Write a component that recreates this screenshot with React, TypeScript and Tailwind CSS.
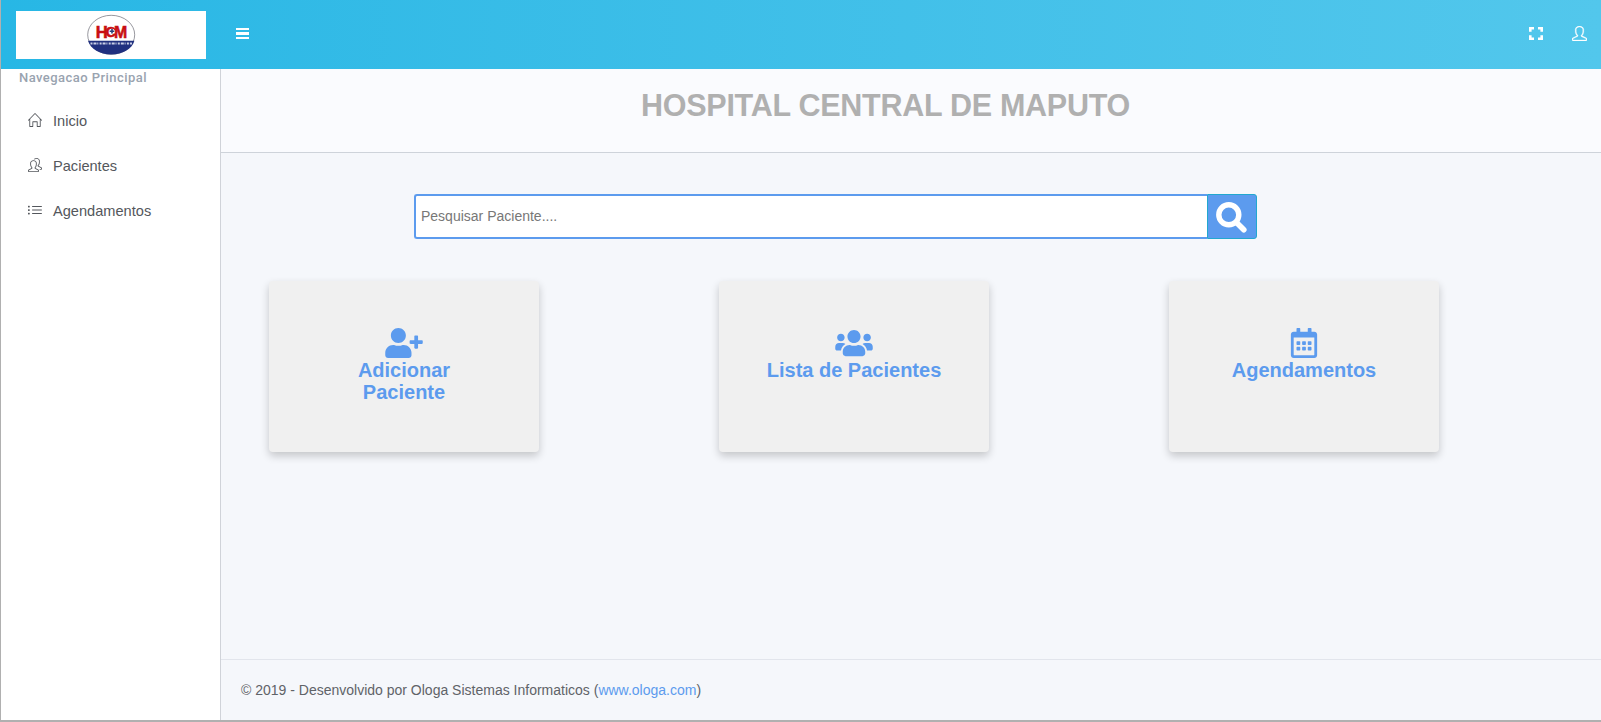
import React from "react";
import { FaRegCalendarAlt, FaUserPlus, FaUsers } from "react-icons/fa";
import { SlHome, SlList, SlPeople, SlUser } from "react-icons/sl";

function Logo() {
  return (
    <svg width="50" height="42" viewBox="0 0 50 42" aria-label="HCM">
      <ellipse cx="25.200" cy="20.800" rx="23.500" ry="19.500" fill="#fff" stroke="#6b6b75" strokeWidth="0.7" />
      <path d="M2 26.700H48.400C46 35 36.500 40.500 25.200 40.500S4.500 35 2 26.700Z" fill="#20307f" />
      <g fill="#c80f12" stroke="#c80f12" strokeWidth="0.6" fontFamily="Liberation Sans, sans-serif" fontWeight="700">
        <text x="9.800" y="24" textLength="12" lengthAdjust="spacingAndGlyphs" fontSize="17">H</text>
        <text x="19.800" y="23.200" textLength="10" lengthAdjust="spacingAndGlyphs" fontSize="14.500">C</text>
        <text x="28" y="24" textLength="13.200" lengthAdjust="spacingAndGlyphs" fontSize="17">M</text>
      </g>
      <circle cx="26" cy="17.300" r="2.600" fill="#fff" />
      <path d="M23.700 17.300h4.600M26 15v4.600" stroke="#27407a" strokeWidth="1.600" />
      <path d="M4.500 29.400H46" stroke="#c9cee6" strokeWidth="2" strokeDasharray="2 1 3 .8 1 1.300" />
    </svg>
  );
}

function Fullscreen() {
  return (
    <svg width="14" height="13" viewBox="0 0 14 13" fill="none" stroke="#fff" strokeWidth="2.600">
      <path d="M1.300 4.800V1.300H5M9 1.300H12.700V4.800M12.700 8.200V11.700H9M5 11.700H1.300V8.200" />
    </svg>
  );
}

function SearchGlyph() {
  return (
    <svg width="31" height="31" viewBox="0 0 31 31" fill="none" stroke="#fff">
      <circle cx="12.800" cy="12.800" r="10" strokeWidth="5.400" />
      <path d="M20.500 20.500L27.800 27.800" strokeWidth="5.600" strokeLinecap="round" />
    </svg>
  );
}

const nav = [
  { label: "Inicio", Icon: SlHome },
  { label: "Pacientes", Icon: SlPeople },
  { label: "Agendamentos", Icon: SlList },
];

const cards = [
  { label: "Adicionar Paciente", Icon: FaUserPlus },
  { label: "Lista de Pacientes", Icon: FaUsers },
  { label: "Agendamentos", Icon: FaRegCalendarAlt },
];

export default function App() {
  return (
    <div className="flex h-[722px] w-[1601px] flex-col overflow-hidden border-b-2 border-l border-[#b0b0b0] bg-[#f5f7fb] font-['Liberation_Sans',Arial,sans-serif]">
      <header className="flex h-[69px] shrink-0 items-center bg-linear-to-r from-[#27b7e5] to-[#52c7ec] pr-[14px] pl-[15px] text-white">
        <div className="flex h-12 w-[190px] items-center justify-center bg-white">
          <Logo />
        </div>
        <button className="mb-[2px] ml-[30px] flex w-[13px] flex-col gap-[2px]" aria-label="Menu">
          <span className="h-[2.500px] w-full bg-white" />
          <span className="h-[2.500px] w-full bg-white" />
          <span className="h-[2.500px] w-full bg-white" />
        </button>
        <div className="mb-[2px] ml-auto flex items-center gap-[29px]">
          <Fullscreen />
          <SlUser size={15} className="stroke-white stroke-[25]" />
        </div>
      </header>

      <div className="flex min-h-0 flex-1">
        <aside className="w-[220px] shrink-0 border-r border-[#d0d3d9] bg-white">
          <h2 className="pl-[18px] font-[Roboto,sans-serif] text-[13px] leading-[17px] font-medium tracking-[0.45px] text-[#99a3b0]">Navegacao Principal</h2>
          <nav className="mt-[12px]">
            {nav.map(({ label, Icon }) => (
              <a key={label} className="flex h-[45px] items-center gap-[11px] pl-[27px] text-[14.600px] text-[#54575c]">
                <Icon size={14} className="mb-px" />
                <span className="pt-[3px]">{label}</span>
              </a>
            ))}
          </nav>
        </aside>

        <main className="flex min-w-0 flex-1 flex-col">
          <section className="h-[84px] shrink-0 border-b border-[#ced3da] bg-[#fafbfe] pt-[18px] pr-[51px] text-center">
            <h1 className="text-[30.500px] leading-9 font-bold tracking-[-0.27px] whitespace-nowrap text-[#b0b0b0]">HOSPITAL CENTRAL DE MAPUTO</h1>
          </section>

          <div className="mt-[41px] ml-[193px] flex h-[45px] w-[843px]">
            <input
              className="w-[793px] rounded-l-[3px] border-2 border-r-0 border-[#5c9bee] bg-white px-[5px] pb-px text-[14px] text-[#444] placeholder:text-[#777] placeholder:opacity-100 focus:outline-none"
              placeholder="Pesquisar Paciente...."
            />
            <button className="flex w-[50px] items-center justify-center rounded-r-[3px] border border-[#22a8cf] bg-[#5c9bee] pt-[2px] pr-px" aria-label="Pesquisar">
              <SearchGlyph />
            </button>
          </div>

          <div className="mt-[42px] ml-[48px] flex gap-[180px]">
            {cards.map(({ label, Icon }) => (
              <a key={label} className="flex h-[171px] w-[270px] flex-col items-center rounded-[4px] bg-[#f0f0f0] pt-[47px] text-center text-[#5c9bee] shadow-[0_4px_8px_0_rgba(0,0,0,0.2)]">
                <Icon className="h-[30px] w-[38px]" />
                <span className="mt-px w-[180px] px-px text-[20px] leading-[22px] font-bold">{label}</span>
              </a>
            ))}
          </div>

          <footer className="mt-auto h-[61px] shrink-0 border-t border-[#e2e5ec] pt-[20px] pl-5 text-[14px] leading-[21px] text-[#5f6368]">
            © 2019 - Desenvolvido por Ologa Sistemas Informaticos (<a className="text-[#5c9bee]">www.ologa.com</a>)
          </footer>
        </main>
      </div>
    </div>
  );
}
